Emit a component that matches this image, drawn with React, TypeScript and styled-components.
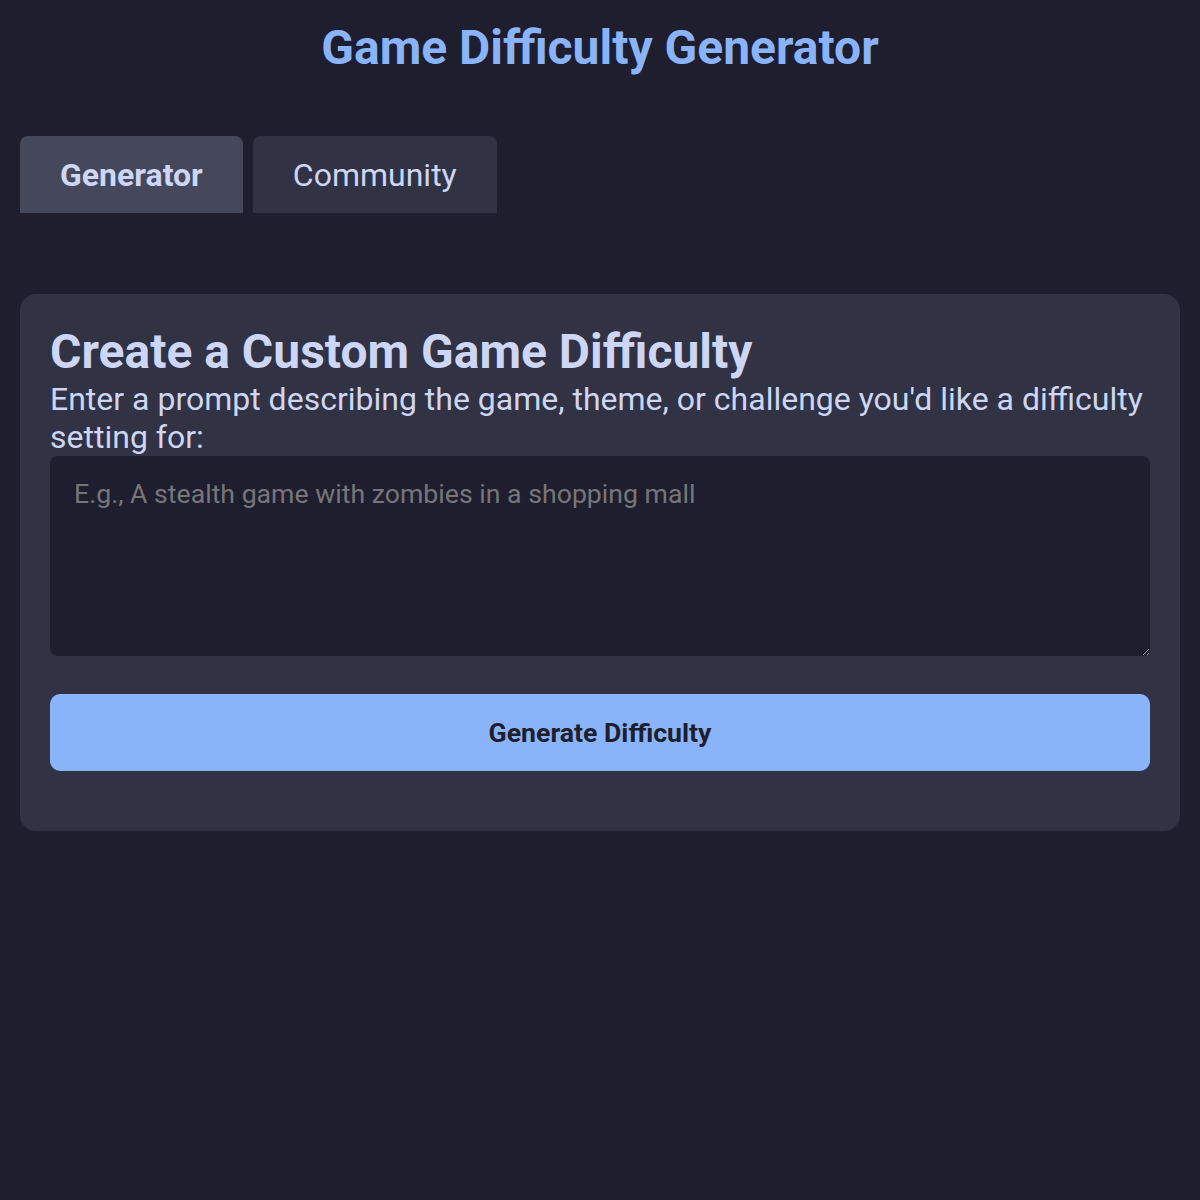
import styled, { createGlobalStyle } from "styled-components";

const GlobalStyle = createGlobalStyle`
  body {
    margin: 0;
    background: #1e1e2e;
    font-family: Roboto, "Liberation Sans", sans-serif;
    color: #cdd6f4;
  }
`;

const Page = styled.div`
  padding: 20px;
  display: flex;
  flex-direction: column;
`;

const Title = styled.h1`
  margin: 0;
  text-align: center;
  font-size: 48px;
  font-weight: 700;
  line-height: 56px;
  color: #89b4fa;
`;

const TabBar = styled.div`
  display: flex;
  gap: 10px;
  margin-top: 60px;
`;

const Tab = styled.button<{ $active?: boolean }>`
  border: none;
  border-radius: 8px 8px 0 0;
  padding: 0 40px;
  height: 77px;
  font-family: inherit;
  font-size: 32px;
  font-weight: ${(p) => (p.$active ? 700 : 400)};
  color: #cdd6f4;
  background: ${(p) => (p.$active ? "#45475a" : "#313244")};
  cursor: pointer;
`;

const Card = styled.section`
  margin-top: 81px;
  background: #313244;
  border-radius: 16px;
  padding: 30px 30px 60px;
  display: flex;
  flex-direction: column;
`;

const Heading = styled.h2`
  margin: 0;
  font-size: 48px;
  font-weight: 700;
  line-height: 56px;
`;

const Prompt = styled.p`
  margin: 0;
  font-size: 32px;
  line-height: 38px;
`;

const PromptInput = styled.textarea`
  box-sizing: border-box;
  width: 100%;
  height: 200px;
  border: none;
  border-radius: 8px;
  background: #1e1e2e;
  color: #cdd6f4;
  padding: 22px 24px;
  font-family: inherit;
  font-size: 26.67px;
  outline: none;

  &::placeholder {
    color: #76767a;
  }
`;

const GenerateButton = styled.button`
  margin-top: 38px;
  height: 77px;
  border: none;
  border-radius: 10px;
  background: #89b4fa;
  color: #1e1e2e;
  font-family: inherit;
  font-size: 26.67px;
  font-weight: 700;
  cursor: pointer;
`;

export default function App() {
  return (
    <>
      <GlobalStyle />
      <Page>
        <Title>Game Difficulty Generator</Title>
        <TabBar>
          <Tab $active>Generator</Tab>
          <Tab>Community</Tab>
        </TabBar>
        <Card>
          <Heading>Create a Custom Game Difficulty</Heading>
          <Prompt>
            Enter a prompt describing the game, theme, or challenge you'd like a
            difficulty setting for:
          </Prompt>
          <PromptInput placeholder="E.g., A stealth game with zombies in a shopping mall" />
          <GenerateButton>Generate Difficulty</GenerateButton>
        </Card>
      </Page>
    </>
  );
}
